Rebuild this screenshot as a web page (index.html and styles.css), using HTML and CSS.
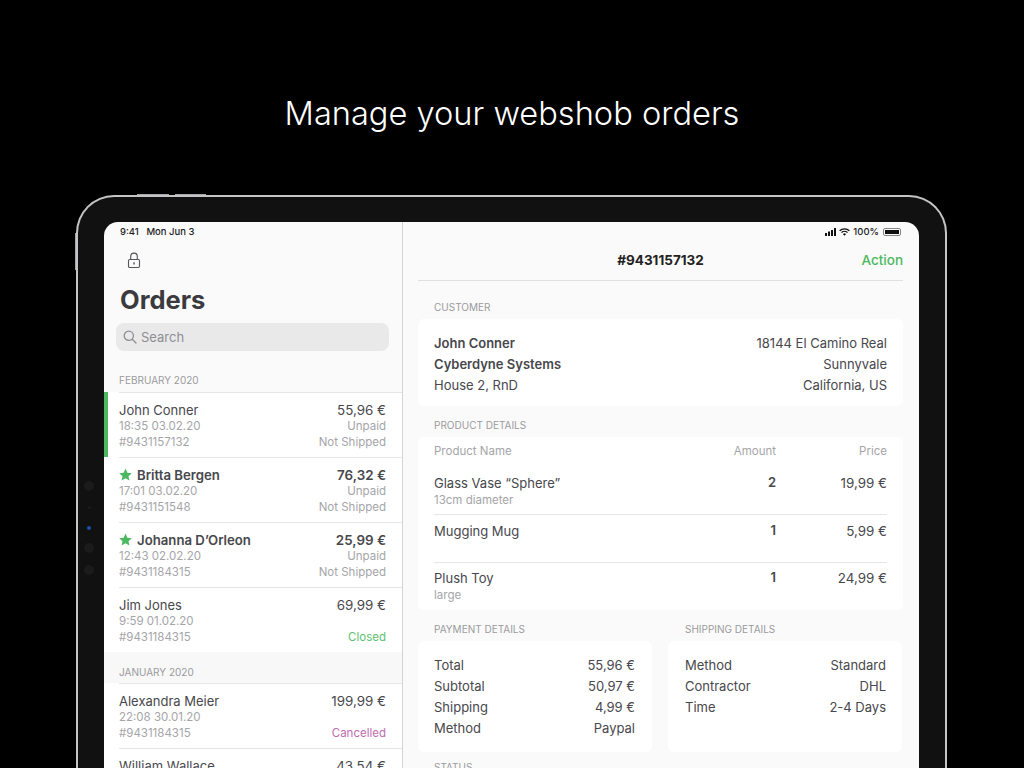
FILE: index.html
```html
<!DOCTYPE html>
<html>

<head>
  <meta name="viewport" content="width=device-width, user-scalable=no" />
  <title>Manage your webshob orders</title>
  <link rel="stylesheet" href="styles.css">
</head>

<body>

<h1 class="headline">Manage your webshob orders</h1>

<div class="device">
  <div class="btn-top btn-top-a"></div>
  <div class="btn-top btn-top-b"></div>
  <div class="btn-side"></div>
  <div class="cam cam-a"></div>
  <div class="cam cam-b"></div>
  <div class="cam cam-led"></div>
  <div class="cam cam-c"></div>
  <div class="cam cam-d"></div>

  <div class="screen">
    <div class="sidebar">
      <div class="status status-left">9:41&nbsp;&nbsp;&nbsp;Mon Jun 3</div>
      <div class="lock">
        <svg width="14" height="17" viewBox="0 0 14 17" fill="none" stroke="#55555a" stroke-width="1.1">
          <path d="M3.7 7.5V4.4a3.3 3.3 0 0 1 6.6 0v3.1" />
          <rect x="1.5" y="7.5" width="11" height="8" rx="1.2" />
          <rect x="6.3" y="10.3" width="1.4" height="2.2" fill="#55555a" stroke="none" />
        </svg>
      </div>
      <h2 class="big-title">Orders</h2>
      <div class="search">
        <svg width="14" height="14" viewBox="0 0 14 14" fill="none" stroke="#8e8e93" stroke-width="1.3">
          <circle cx="5.8" cy="5.8" r="4.6" />
          <path d="M9.2 9.2L13 13" stroke-linecap="round" />
        </svg>
        <span>Search</span>
      </div>

      <div class="month month-first">FEBRUARY 2020</div>
      <div class="order active">
        <div class="order-left"><div class="name">John Conner</div><div class="sub">18:35 03.02.20</div><div class="sub">#9431157132</div></div>
        <div class="order-right"><div class="price">55,96 €</div><div class="sub">Unpaid</div><div class="sub">Not Shipped</div></div>
      </div>
      <div class="order">
        <div class="order-left"><div class="name strong"><svg class="star" width="13" height="13" viewBox="0 0 24 24"><path d="M12 1l3.4 7.6 8.2.9-6.1 5.5 1.7 8.1L12 19l-7.2 4.1 1.7-8.1L.4 9.5l8.2-.9z" /></svg>Britta Bergen</div><div class="sub">17:01 03.02.20</div><div class="sub">#9431151548</div></div>
        <div class="order-right"><div class="price strong">76,32 €</div><div class="sub">Unpaid</div><div class="sub">Not Shipped</div></div>
      </div>
      <div class="order">
        <div class="order-left"><div class="name strong"><svg class="star" width="13" height="13" viewBox="0 0 24 24"><path d="M12 1l3.4 7.6 8.2.9-6.1 5.5 1.7 8.1L12 19l-7.2 4.1 1.7-8.1L.4 9.5l8.2-.9z" /></svg>Johanna D’Orleon</div><div class="sub">12:43 02.02.20</div><div class="sub">#9431184315</div></div>
        <div class="order-right"><div class="price strong">25,99 €</div><div class="sub">Unpaid</div><div class="sub">Not Shipped</div></div>
      </div>
      <div class="order">
        <div class="order-left"><div class="name">Jim Jones</div><div class="sub">9:59 01.02.20</div><div class="sub">#9431184315</div></div>
        <div class="order-right"><div class="price">69,99 €</div><div class="sub">&nbsp;</div><div class="sub closed">Closed</div></div>
      </div>

      <div class="month">JANUARY 2020</div>
      <div class="order">
        <div class="order-left"><div class="name">Alexandra Meier</div><div class="sub">22:08 30.01.20</div><div class="sub">#9431184315</div></div>
        <div class="order-right"><div class="price">199,99 €</div><div class="sub">&nbsp;</div><div class="sub cancelled">Cancelled</div></div>
      </div>
      <div class="order">
        <div class="order-left"><div class="name">William Wallace</div></div>
        <div class="order-right"><div class="price">43,54 €</div></div>
      </div>
    </div>

    <div class="detail">
      <div class="status status-right">
        <svg width="11" height="8" viewBox="0 0 11 8" fill="#111"><rect x="0" y="5" width="2" height="3" /><rect x="3" y="3.5" width="2" height="4.5" /><rect x="6" y="2" width="2" height="6" /><rect x="9" y="0" width="2" height="8" /></svg>
        <svg width="11" height="8" viewBox="0 0 11 8" fill="none" stroke="#111" stroke-width="1.3"><path d="M.6 2.8a7 7 0 0 1 9.8 0" /><path d="M2.5 4.6a4.3 4.3 0 0 1 6 0" /><path d="M5.5 7.8L4 6.2a2 2 0 0 1 3 0z" fill="#111" stroke="none" /></svg>
        <span>100%</span>
        <span class="battery"><span class="battery-fill"></span></span>
      </div>

      <div class="navbar">
        <div class="nav-title">#9431157132</div>
        <div class="nav-action">Action</div>
      </div>

      <div class="label label-customer">CUSTOMER</div>
      <div class="card card-customer">
        <div class="pair"><span class="semi">John Conner</span><span>18144 El Camino Real</span></div>
        <div class="pair"><span class="semi">Cyberdyne Systems</span><span>Sunnyvale</span></div>
        <div class="pair"><span>House 2, RnD</span><span>California, US</span></div>
      </div>

      <div class="label label-product">PRODUCT DETAILS</div>
      <div class="card card-product">
        <div class="prod-head"><span>Product Name</span><span>Amount</span><span>Price</span></div>
        <div class="prod prod-first">
          <div><div>Glass Vase “Sphere”</div><div class="prod-sub">13cm diameter</div></div>
          <div class="amount">2</div>
          <div class="prod-price">19,99 €</div>
        </div>
        <div class="prod">
          <div>Mugging Mug</div>
          <div class="amount">1</div>
          <div class="prod-price">5,99 €</div>
        </div>
        <div class="prod prod-last">
          <div><div>Plush Toy</div><div class="prod-sub">large</div></div>
          <div class="amount">1</div>
          <div class="prod-price">24,99 €</div>
        </div>
      </div>

      <div class="columns">
        <div>
          <div class="label label-column">PAYMENT DETAILS</div>
          <div class="card card-small card-pay">
            <div class="pair"><span>Total</span><span>55,96 €</span></div>
            <div class="pair"><span>Subtotal</span><span>50,97 €</span></div>
            <div class="pair"><span>Shipping</span><span>4,99 €</span></div>
            <div class="pair"><span>Method</span><span>Paypal</span></div>
          </div>
        </div>
        <div>
          <div class="label label-column label-ship">SHIPPING DETAILS</div>
          <div class="card card-small card-ship">
            <div class="pair"><span>Method</span><span>Standard</span></div>
            <div class="pair"><span>Contractor</span><span>DHL</span></div>
            <div class="pair"><span>Time</span><span>2-4 Days</span></div>
          </div>
        </div>
      </div>

      <div class="label label-status">STATUS</div>
    </div>
  </div>
</div>

</body>
</html>
```

FILE: styles.css
```css
html, body {
  height: 768px;
}
body {
  margin: 0;
  overflow: hidden;
  background-color: #000;
  font-family: Inter, "Liberation Sans", sans-serif;
  font-size: 13px;
  color: #47474c;
}

.headline {
  margin: 0;
  padding-top: 93px;
  height: 195px;
  box-sizing: border-box;
  text-align: center;
  font-size: 32.6px;
  line-height: 41px;
  font-weight: 300;
  color: #fff;
}

/* device frame */
.device {
  position: relative;
  box-sizing: border-box;
  width: 871px;
  height: 573px;
  margin-left: 76px;
  padding: 25px 26px 0;
  background-color: #111;
  border: 2px solid #c4c4c6;
  border-bottom: 0;
  border-radius: 38px 38px 0 0;
}
.btn-top {
  position: absolute;
  top: -3px;
  height: 1px;
  background-color: #a8a8aa;
}
.btn-top-a {
  left: 59px;
  width: 32px;
}
.btn-top-b {
  left: 97px;
  width: 31px;
}
.btn-side {
  position: absolute;
  left: -3px;
  top: 36px;
  width: 1px;
  height: 37px;
  background-color: #a8a8aa;
}
.cam {
  position: absolute;
  left: 6px;
  width: 10px;
  height: 10px;
  border-radius: 50%;
  background-color: #1b1b1b;
}
.cam-a { top: 284px; }
.cam-b { top: 309px; left: 10px; width: 3px; height: 3px; }
.cam-led { top: 329px; left: 9px; width: 4px; height: 4px; background-color: #1c4fa8; }
.cam-c { top: 346px; }
.cam-d { top: 368px; }

.screen {
  display: grid;
  grid-template-columns: 299px 1fr;
  height: 100%;
  overflow: hidden;
  background-color: #fafafa;
  border-radius: 14px 14px 0 0;
}

.status {
  height: 19px;
  font-size: 9.5px;
  line-height: 19px;
  font-weight: 500;
  color: #222;
}

/* left column */
.sidebar {
  border-right: 1px solid #d4d4d6;
}
.status-left {
  padding-left: 16px;
}
.lock {
  height: 27px;
  padding: 11px 0 0 23px;
}
.big-title {
  margin: 4px 0 0;
  padding-left: 16px;
  font-size: 25.5px;
  line-height: 33px;
  font-weight: 700;
  color: #3a3a3f;
}
.search {
  display: flex;
  align-items: center;
  gap: 4px;
  height: 28px;
  margin: 7px 13px 0 12px;
  padding-left: 7px;
  background-color: #e9e9ea;
  border-radius: 8px;
  color: #8e8e93;
}
.month {
  padding: 13px 0 0 15px;
  height: 18px;
  font-size: 10px;
  line-height: 14px;
  color: #9a9a9e;
  background-color: #f8f8f8;
}
.month-first {
  height: 19px;
  padding-top: 22px;
  background: none;
}
.order {
  display: flex;
  justify-content: space-between;
  box-sizing: border-box;
  height: 65px;
  padding: 10px 16px 0 15px;
  background-color: #fff;
  background-image: linear-gradient(#e6e6e8, #e6e6e8);
  background-size: calc(100% - 15px) 1px;
  background-position: 15px 0;
  background-repeat: no-repeat;
}
.order.active {
  box-shadow: inset 4px 0 0 #4cb860;
}
.name, .price {
  height: 16px;
  line-height: 16px;
  color: #47474c;
}
.price {
  font-size: 13.4px;
}
.strong {
  font-weight: 600;
}
.star {
  margin-right: 5px;
  fill: #4cb860;
  vertical-align: -1px;
}
.name.strong {
  font-size: 13.2px;
}
.sub {
  height: 16px;
  line-height: 16px;
  font-size: 11.5px;
  color: #a5a5a9;
}
.order-right {
  text-align: right;
}
.closed {
  color: #5cc16f;
}
.cancelled {
  color: #c06cb0;
}

/* right column */
.detail {
  padding: 0 16px 0 15px;
}
.status-right {
  display: flex;
  justify-content: flex-end;
  align-items: center;
  gap: 3px;
  padding-right: 2px;
}
.battery {
  display: block;
  width: 18px;
  height: 8px;
  margin-left: 1px;
  padding: 1px;
  box-sizing: border-box;
  border: 1px solid #888;
  border-radius: 2px;
}
.battery-fill {
  display: block;
  height: 100%;
  background-color: #111;
}
.navbar {
  display: flex;
  align-items: center;
  justify-content: center;
  position: relative;
  box-sizing: border-box;
  height: 40px;
  padding-bottom: 1px;
  border-bottom: 1px solid #e0e0e2;
}
.nav-title {
  font-weight: 700;
  font-size: 13.5px;
  color: #222;
}
.nav-action {
  position: absolute;
  right: 0;
  top: 11px;
  font-weight: 500;
  font-size: 13.5px;
  color: #4cb860;
}
.label {
  padding-left: 16px;
  height: 14px;
  font-size: 10px;
  line-height: 12px;
  color: #9a9a9e;
}
.label-customer {
  margin-top: 20px;
  margin-bottom: 4px;
}
.label-product {
  margin-top: 13px;
  margin-bottom: 4px;
}
.label-column {
  margin-bottom: 4px;
}
.label-ship {
  padding-left: 17px;
}
.label-status {
  margin-top: 9px;
}
.card {
  box-sizing: border-box;
  padding: 0 16px;
  background-color: #fff;
  border-radius: 6px;
}
.card-customer {
  height: 87px;
  padding-top: 14px;
}
.pair {
  display: flex;
  justify-content: space-between;
  height: 21px;
  line-height: 21px;
}
.semi {
  font-weight: 600;
}
.card-product {
  height: 173px;
}
.prod-head, .prod {
  display: grid;
  grid-template-columns: 1fr 60px 111px;
  text-align: right;
}
.prod-head {
  height: 27px;
  line-height: 28px;
  font-size: 11.5px;
  color: #a5a5a9;
}
.prod-head span:first-child, .prod > div:first-child {
  text-align: left;
}
.prod {
  height: 48px;
  padding-top: 8px;
  box-sizing: border-box;
  line-height: 17px;
  border-top: 1px solid #e6e6e8;
}
.prod-first {
  height: 50px;
  padding-top: 11px;
  border-top: 0;
}
.prod-last {
  padding-top: 7px;
}
.prod-sub {
  font-size: 11.5px;
  color: #a5a5a9;
}
.prod-price {
  font-size: 13.4px;
}
.amount {
  font-weight: 600;
  margin-top: -1px;
}
.columns {
  display: grid;
  grid-template-columns: 234px 234px;
  gap: 16px;
  margin-top: 13px;
}
.card-small {
  height: 111px;
  padding-top: 14px;
}
.card-pay {
  padding-right: 17px;
}
.card-ship {
  padding-left: 17px;
}
```
